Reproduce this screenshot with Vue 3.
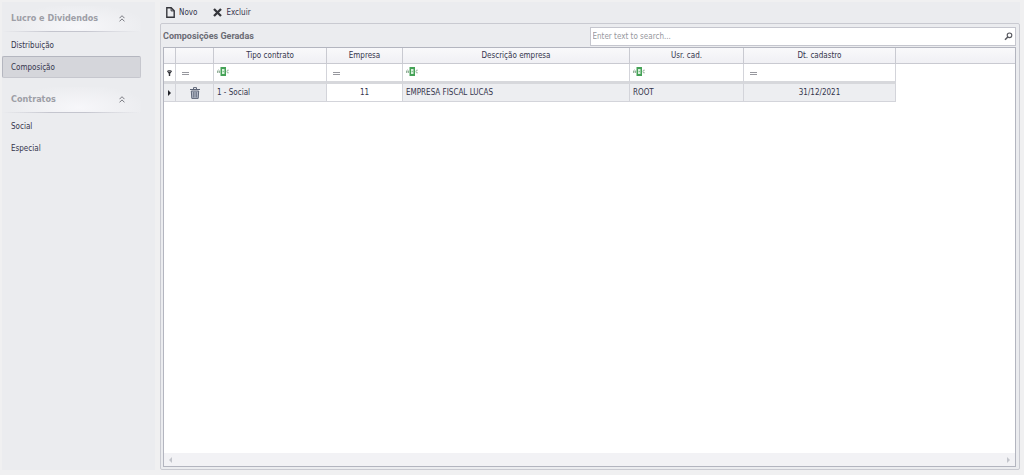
<script setup>
import { ref } from 'vue'

const groups = [
  { title: 'Lucro e Dividendos', items: ['Distribuição', 'Composição'] },
  { title: 'Contratos', items: ['Social', 'Especial'] }
]
const active = ref('Composição')
const search = ref('')

const columns = [
  { key: 'tipo', label: 'Tipo contrato', filter: 'text' },
  { key: 'empresa', label: 'Empresa', filter: 'equals', center: true },
  { key: 'descricao', label: 'Descrição empresa', filter: 'text' },
  { key: 'usuario', label: 'Usr. cad.', filter: 'text' },
  { key: 'data', label: 'Dt. cadastro', filter: 'equals', center: true }
]
const rows = [
  { tipo: '1 - Social', empresa: '11', descricao: 'EMPRESA FISCAL LUCAS', usuario: 'ROOT', data: '31/12/2021' }
]
</script>

<template>
  <div class="app">
    <nav class="sidebar">
      <section v-for="g in groups" :key="g.title" class="group">
        <button type="button" class="group-head">
          <span>{{ g.title }}</span>
          <svg width="6" height="7" viewBox="0 0 6 7" fill="none" stroke="#77787f">
            <path d="M.5 3.2 3 .7l2.5 2.5M.5 6.4 3 3.9l2.5 2.5" />
          </svg>
        </button>
        <a
          v-for="item in g.items"
          :key="item"
          href="#"
          class="item"
          :class="{ active: item === active }"
          @click.prevent="active = item"
        >{{ item }}</a>
      </section>
    </nav>

    <main class="main">
      <div class="toolbar">
        <button type="button" class="tool">
          <svg width="9" height="11" viewBox="0 0 9 11" fill="none" stroke="#34353b" stroke-width="1.4">
            <path d="M.8.8h4.4L8.2 3.8v6.4H.8z" />
            <path d="M5.1.9v3h3" stroke-width="1" />
          </svg>
          Novo
        </button>
        <button type="button" class="tool">
          <svg width="9" height="9" viewBox="0 0 9 9" fill="none" stroke="#34353b" stroke-width="2.3">
            <path d="m1 1 7 7M8 1 1 8" />
          </svg>
          Excluir
        </button>
      </div>

      <section class="panel">
        <header class="panel-head">
          <h1>Composições Geradas</h1>
          <label class="search">
            <input v-model="search" type="text" placeholder="Enter text to search..." aria-label="Search" />
            <svg width="9" height="9" viewBox="0 0 9 9" fill="none" stroke="#56575e">
              <circle cx="5.5" cy="3.3" r="2.3" stroke-width="1.1" />
              <path d="M3.8 5 1 7.8" stroke-width="1.5" />
            </svg>
          </label>
        </header>

        <div class="grid">
          <table>
            <colgroup>
              <col class="c-mark" /><col class="c-del" /><col class="c-tipo" /><col class="c-emp" />
              <col class="c-desc" /><col class="c-usr" /><col class="c-data" /><col />
            </colgroup>
            <thead>
              <tr>
                <th></th>
                <th></th>
                <th v-for="c in columns" :key="c.key" scope="col">{{ c.label }}</th>
                <th class="rest"></th>
              </tr>
            </thead>
            <tbody>
              <tr class="filters">
                <td class="mark">
                  <svg width="5" height="6" viewBox="0 0 5 6" fill="#33343a">
                    <path d="M0 1.3C0-.2 5-.2 5 1.3L3.2 3.8V6H1.8V3.8z" />
                    <path d="M1.4 1.5h2.2" stroke="#c9cad0" stroke-width=".6" />
                  </svg>
                </td>
                <td>
                  <button type="button" class="equals" aria-label="Equals">
                    <svg width="7" height="3" viewBox="0 0 7 3"><path d="M0 .5h7M0 2.5h7" stroke="#97989e" /></svg>
                  </button>
                </td>
                <td v-for="c in columns" :key="c.key">
                  <button v-if="c.filter === 'text'" type="button" aria-label="Contains">
                    <svg width="12" height="9" viewBox="0 0 12 9" fill="none">
                      <path d="M.5 6V3.8q1-1.6 2 0V6M.5 4.9h2" stroke="#83a58a" stroke-width=".8" />
                      <path d="M11.8 3.2q-1.8-.8-1.8 1.3t1.8 1.3" stroke="#83a58a" stroke-width=".8" />
                      <path d="M3.5 0h5.5v9H3.500z" fill="#45a257" />
                      <path d="M5 2h2.5v5H5z" fill="#d9f0dc" />
                      <path d="M5.700 4.500h1.100" stroke="#45a257" stroke-width=".7" />
                    </svg>
                  </button>
                  <button v-else type="button" class="equals" aria-label="Equals">
                    <svg width="7" height="3" viewBox="0 0 7 3"><path d="M0 .5h7M0 2.5h7" stroke="#97989e" /></svg>
                  </button>
                </td>
                <td class="rest"></td>
              </tr>
              <tr v-for="r in rows" :key="r.empresa" class="data">
                <td class="mark">
                  <svg width="3" height="6" viewBox="0 0 3 6"><path d="M0 0v6l3-3z" fill="#202127" /></svg>
                </td>
                <td class="del">
                  <button type="button" aria-label="Excluir">
                    <svg width="10" height="12" viewBox="0 0 10 12" fill="none" stroke="#5d6577">
                      <path d="M3.5 2V.6h3V2M0 2.500h10" />
                      <path d="M1.300 4h7.400l-.5 7.400H1.800z" fill="#bcc3cf" />
                      <path d="M3.400 5v5.500M5 5v5.500M6.600 5v5.500" stroke-width=".8" />
                    </svg>
                  </button>
                </td>
                <td
                  v-for="c in columns"
                  :key="c.key"
                  :class="{ center: c.center, focused: c.key === 'empresa' }"
                >{{ r[c.key] }}</td>
                <td class="rest"></td>
              </tr>
            </tbody>
          </table>
          <div class="scrollbar">
            <svg width="3" height="6" viewBox="0 0 3 6"><path d="M3 0v6L0 3z" fill="#c3c5cc" /></svg>
            <svg width="3" height="6" viewBox="0 0 3 6"><path d="M0 0v6l3-3z" fill="#c3c5cc" /></svg>
          </div>
        </div>
      </section>
    </main>
  </div>
</template>

<style>
body {
  margin: 0;
  background: #f0f0f1;
}
</style>

<style scoped>
* {
  box-sizing: border-box;
}
.app {
  display: flex;
  gap: 5px;
  height: 100vh;
  padding: 2px 4px 5px 2px;
  font-family: 'DejaVu Sans Condensed', 'DejaVu Sans', sans-serif;
  font-size: 8px;
  color: #34354c;
}
svg {
  display: block;
  flex: none;
}
button {
  padding: 0;
  border: 0;
  background: none;
  font: inherit;
  color: inherit;
}
.sidebar {
  flex: none;
  width: 153px;
  padding-top: 4px;
  background: #ebecef;
}
.group {
  width: 139px;
  padding-bottom: 9px;
}
.group-head {
  display: flex;
  align-items: center;
  justify-content: space-between;
  width: 100%;
  height: 26px;
  padding: 0 16px 2px 9px;
  margin-bottom: 2px;
  background:
    linear-gradient(90deg, #c9cad200, #c4c5ce 35%, #c4c5ce 60%, #c9cad200) bottom / 100% 1px no-repeat,
    radial-gradient(ellipse 50% 90% at 55% 80%, #f7f7fa, #f7f7fa00);
  font-size: 9px;
  font-weight: bold;
  color: #9d9ea6;
}
.item {
  display: flex;
  align-items: center;
  height: 22px;
  padding-left: 8px;
  border: 1px solid transparent;
  border-radius: 2px;
  color: inherit;
  text-decoration: none;
}
.item.active {
  border-color: #b4b6bf #c6c7ce #c6c7ce #b4b6bf;
  background: #d5d6db;
}
.main {
  display: flex;
  flex: 1;
  flex-direction: column;
  min-width: 0;
}
.toolbar {
  display: flex;
  align-items: center;
  gap: 16px;
  height: 21px;
  padding-left: 6px;
  background: #ebecef;
}
.tool {
  display: flex;
  align-items: center;
  gap: 4px;
}
.panel {
  display: flex;
  flex: 1;
  flex-direction: column;
  padding: 2px 3px 2px 2px;
  border: 1px solid #c9cad1;
  border-radius: 2px;
  background: #ebecef;
}
.panel-head {
  display: flex;
  align-items: center;
  height: 20px;
}
h1 {
  flex: 1;
  margin: 0;
  font-family: Roboto, sans-serif;
  font-size: 9px;
  color: #6a6b74;
}
.search {
  display: flex;
  align-items: center;
  width: 50%;
  height: 19px;
  padding: 0 2px;
  border: 1px solid #c5c6ce;
  background: #fff;
}
.search input {
  flex: 1;
  min-width: 0;
  padding: 0;
  border: 0;
  outline: 0;
  background: none;
  font: inherit;
  color: inherit;
}
.search input::placeholder {
  color: #96979d;
  opacity: 1;
}
.grid {
  display: flex;
  flex: 1;
  flex-direction: column;
  justify-content: space-between;
  margin-top: 1px;
  border: 1px solid #b3b5bf;
  background: #fff;
}
table {
  width: 100%;
  table-layout: fixed;
  border-collapse: separate;
  border-spacing: 0;
}
.c-mark { width: 12px; }
.c-del { width: 38px; }
.c-tipo { width: 113px; }
.c-emp { width: 76px; }
.c-desc { width: 227px; }
.c-usr { width: 114px; }
.c-data { width: 152px; }
th,
td {
  padding: 0 3px;
  border-right: 1px solid #d3d4da;
  border-bottom: 1px solid #d3d4da;
  white-space: nowrap;
}
th {
  height: 16px;
  background: linear-gradient(#f9f9fb, #f0f0f4);
  border-color: #c9cad1;
  font-weight: normal;
}
.filters td {
  height: 20px;
  border-bottom: 3px solid #d7d8dc;
}
.filters .equals {
  padding: 0 3px;
}
.data td {
  height: 18px;
  background: #edeef1;
}
.data .focused {
  background: #fff;
}
td.center {
  text-align: center;
}
td.mark svg,
td.del button {
  margin: 0 auto;
}
td.del button {
  display: block;
}
.filters .rest,
.data .rest {
  border: 0;
  background: none;
}
th.rest {
  border-right: 0;
}
.scrollbar {
  display: flex;
  align-items: center;
  justify-content: space-between;
  height: 13px;
  padding: 0 5px;
  background: #f2f2f5;
}
</style>
